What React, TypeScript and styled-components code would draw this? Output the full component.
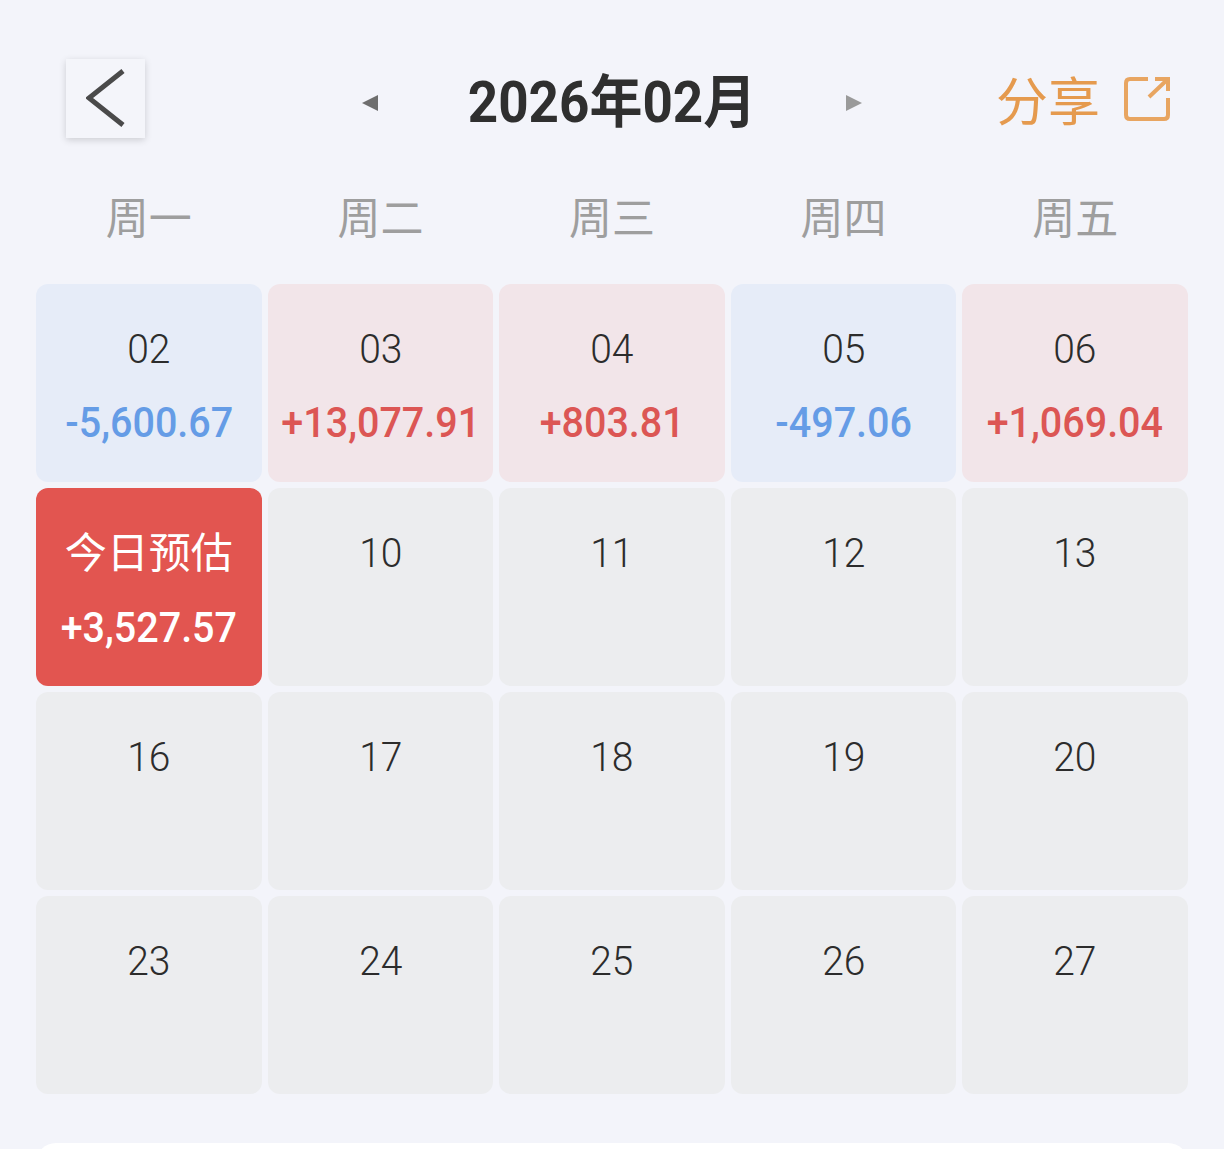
import React from 'react'
import styled, { createGlobalStyle } from 'styled-components'

const GlobalStyle = createGlobalStyle`
    html, body {
        margin: 0;
        padding: 0;
        background: #f3f4fa;
    }
`

type Tone = 'up' | 'down' | 'today' | 'empty'

interface DayData {
    day: string
    value?: string
    tone: Tone
}

const WEEKDAYS = ['周一', '周二', '周三', '周四', '周五']

const DAYS: DayData[] = [
    { day: '02', value: '-5,600.67', tone: 'down' },
    { day: '03', value: '+13,077.91', tone: 'up' },
    { day: '04', value: '+803.81', tone: 'up' },
    { day: '05', value: '-497.06', tone: 'down' },
    { day: '06', value: '+1,069.04', tone: 'up' },
    { day: '今日预估', value: '+3,527.57', tone: 'today' },
    ...['10', '11', '12', '13', '16', '17', '18', '19', '20', '23', '24', '25', '26', '27'].map(
        (day): DayData => ({ day, tone: 'empty' })
    ),
]

const cellBg: Record<Tone, string> = {
    up: '#f2e5e9',
    down: '#e6ecf8',
    today: '#e25550',
    empty: '#ecedef',
}

const valueColor: Record<Tone, string> = {
    up: '#dc5654',
    down: '#659ce6',
    today: '#ffffff',
    empty: '#333333',
}

const App: React.FC = () => (
    <Page>
        <GlobalStyle />
        <Header>
            <BackButton aria-label="back">
                <svg width="40" height="58" viewBox="0 0 40 58" fill="none">
                    <path d="M37 2 L3 29 L37 56" stroke="#4a4a4a" strokeWidth="5" />
                </svg>
            </BackButton>
            <MonthSwitch>
                <svg width="16" height="16" viewBox="0 0 16 16">
                    <path d="M0 8 L16 0 V16 Z" fill="#6e6e6e" />
                </svg>
                <Title>2026年02月</Title>
                <NextArrow width="16" height="16" viewBox="0 0 16 16">
                    <path d="M16 8 L0 0 V16 Z" fill="#9a9a9a" />
                </NextArrow>
            </MonthSwitch>
            <Share>
                <ShareLabel>分享</ShareLabel>
                <svg width="46" height="46" viewBox="0 0 46 46" fill="none" stroke="#e8a561" strokeWidth="4">
                    <path d="M24 3 H6 Q2 3 2 7 V39 Q2 43 6 43 H40 Q44 43 44 39 V22" />
                    <path d="M25 21 L44 3 M31 3 H44 V15" />
                </svg>
            </Share>
        </Header>
        <Weekdays>
            {WEEKDAYS.map(w => (
                <Weekday key={w}>{w}</Weekday>
            ))}
        </Weekdays>
        <Grid>
            {DAYS.map(({ day, value, tone }) => (
                <Cell key={day} $tone={tone}>
                    {tone === 'today' ? <TodayLabel>{day}</TodayLabel> : <DayNum>{day}</DayNum>}
                    {value && <Value $tone={tone}>{value}</Value>}
                </Cell>
            ))}
        </Grid>
        <BottomCard />
    </Page>
)

export default App

const Page = styled.div`
    height: 1149px;
    overflow: hidden;
    padding: 59px 36px 0;
    box-sizing: border-box;
    background: #f3f4fa;
    font-family: Roboto, "Noto Sans CJK SC", sans-serif;
`

const Header = styled.div`
    display: grid;
    grid-template-columns: 1fr auto 1fr;
    grid-template-rows: 79px;
    align-items: center;
    padding: 0 18px;
`

const BackButton = styled.div`
    width: 79px;
    height: 79px;
    margin-left: 12px;
    display: flex;
    align-items: center;
    justify-content: center;
    background: #f4f5fa;
    box-shadow: 0 2px 7px rgba(0, 0, 0, 0.16);

    svg {
        margin-top: -2px;
    }
`

const MonthSwitch = styled.div`
    align-self: start;
    margin-top: 4px;
    display: flex;
    align-items: center;
    gap: 90px;
    color: #333333;
`

const NextArrow = styled.svg`
    margin-left: 2px;
`

const Title = styled.div`
    width: 284px;
    margin-left: 2px;
    display: flex;
    justify-content: center;
    font-size: 57px;
    font-weight: 700;
    line-height: 79px;
    white-space: nowrap;
    color: #2f2f2f;
    transform: scaleX(0.93);
`

const Share = styled.div`
    display: flex;
    align-items: center;
    justify-content: flex-end;
    gap: 24px;
`

const ShareLabel = styled.span`
    font-family: "Noto Sans CJK SC", sans-serif;
    font-size: 52px;
    line-height: 79px;
    color: #e59a4e;
`

const Weekdays = styled.div`
    display: grid;
    grid-template-columns: repeat(5, 1fr);
    column-gap: 6px;
    margin-top: 47px;
`

const Weekday = styled.div`
    font-family: "Noto Sans CJK SC", sans-serif;
    font-size: 43px;
    line-height: 60px;
    text-align: center;
    color: #9e9e9e;
`

const Grid = styled.div`
    display: grid;
    grid-template-columns: repeat(5, 1fr);
    grid-auto-rows: 198px;
    gap: 6px;
    margin-top: 39px;
`

const Cell = styled.div<{ $tone: Tone }>`
    display: flex;
    flex-direction: column;
    align-items: center;
    padding-top: 41px;
    box-sizing: border-box;
    border-radius: 12px;
    background: ${({ $tone }) => cellBg[$tone]};
`

const DayNum = styled.div`
    font-size: 41px;
    font-weight: 300;
    line-height: 48px;
    color: #2c2c2c;
    transform: scaleX(0.95);
`

const TodayLabel = styled.div`
    font-family: "Noto Sans CJK SC", sans-serif;
    font-size: 42px;
    line-height: 48px;
    color: #ffffff;
    margin-top: -3px;
    margin-bottom: 4px;
`

const Value = styled.div<{ $tone: Tone }>`
    margin-top: 26px;
    font-size: 42px;
    font-weight: 500;
    line-height: 48px;
    white-space: nowrap;
    color: ${({ $tone }) => valueColor[$tone]};
    transform: scaleX(0.94);
`

const BottomCard = styled.div`
    height: 120px;
    margin-top: 49px;
    border-radius: 20px 20px 0 0;
    background: #ffffff;
`
